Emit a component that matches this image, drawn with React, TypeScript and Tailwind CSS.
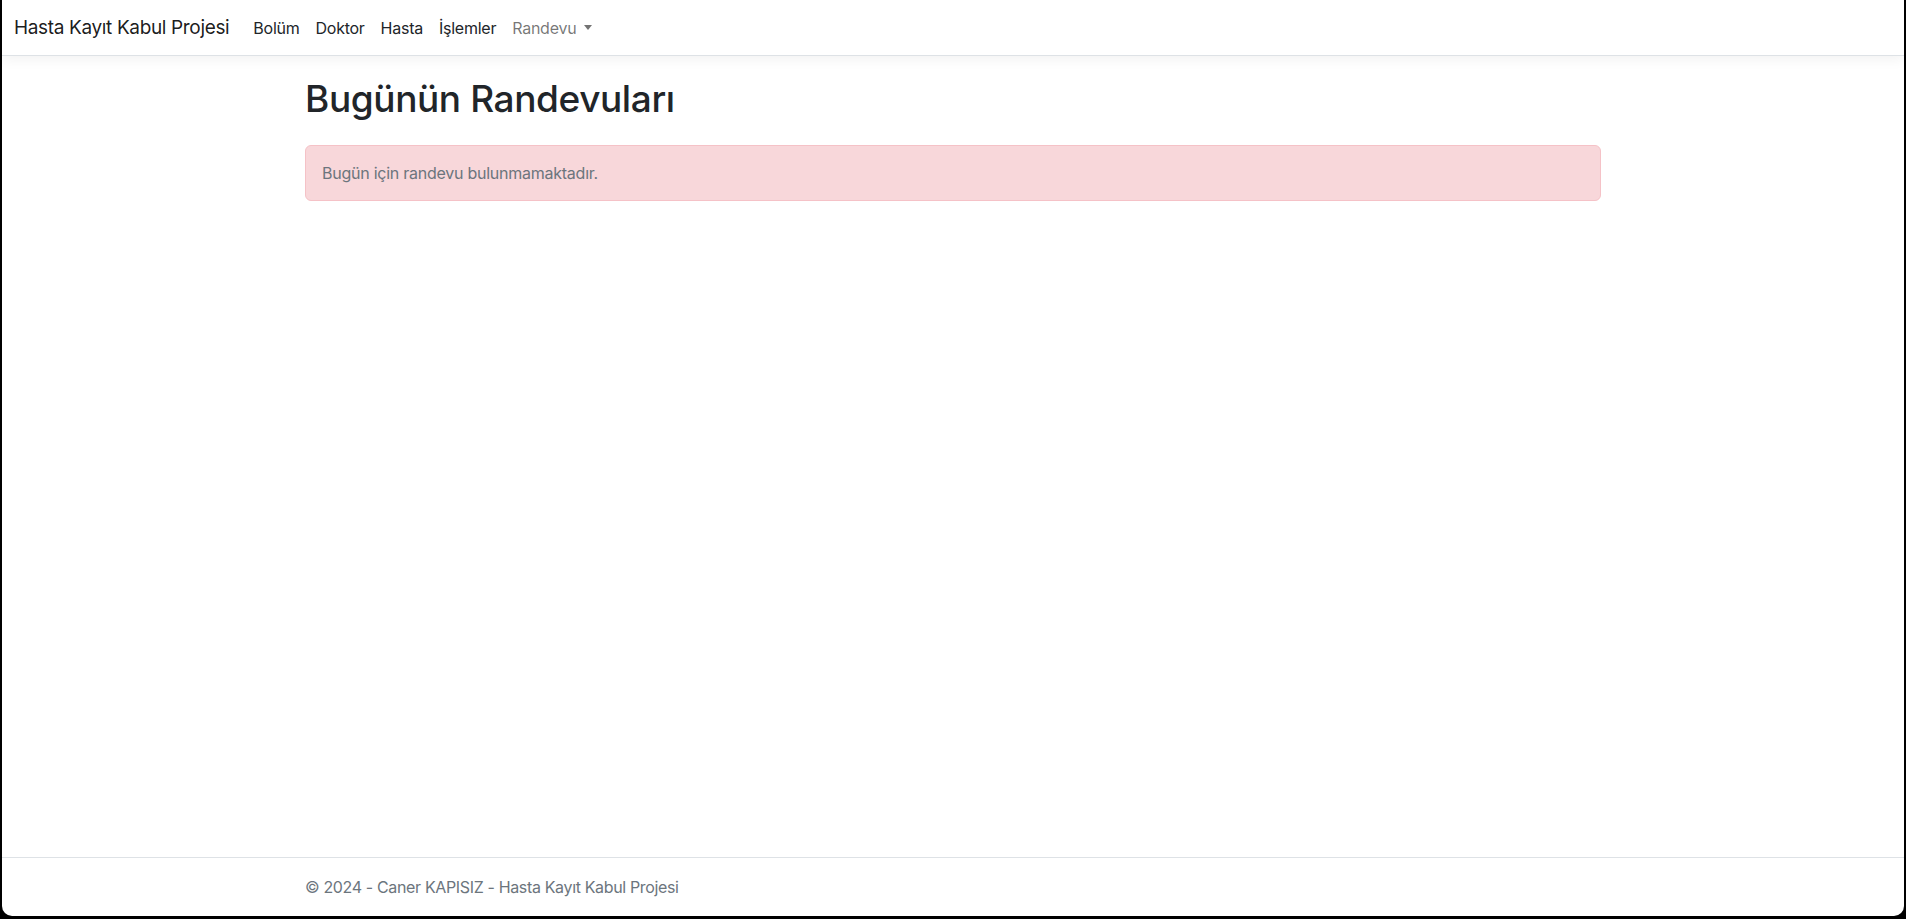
import React from "react";

const navItems = ["Bolüm", "Doktor", "Hasta", "İşlemler"];

const App = () => {
  return (
    <div
      className="h-screen w-full bg-black px-[2px] pb-[3px]"
      style={{ fontFamily: "Inter, 'Noto Sans', sans-serif" }}
    >
      <div className="h-full w-full bg-white rounded-b-[10px] flex flex-col overflow-hidden">
        {/* navbar */}
        <nav className="h-[56px] shrink-0 bg-white border-b border-[#dee2e6] shadow-[0_4px_12px_rgba(0,0,0,0.05)] flex items-center px-[12px] relative z-10">
          <a className="text-[19px] leading-[30px] text-[#000000e6] mr-[16px] tracking-[-0.35px]">
            Hasta Kayıt Kabul Projesi
          </a>
          <ul className="flex items-center">
            {navItems.map((item) => (
              <li key={item}>
                <a className="block px-[8px] py-[8px] text-[16px] leading-[24px] text-[#212529] tracking-[-0.25px]">
                  {item}
                </a>
              </li>
            ))}
            <li>
              <a className="flex items-center px-[8px] py-[8px] text-[16px] leading-[24px] text-[#0000008c] tracking-[-0.25px]">
                Randevu
                <span className="ml-[8px] w-0 h-0 border-x-[4px] border-x-transparent border-t-[5px] border-t-[#0000008c]" />
              </a>
            </li>
          </ul>
        </nav>

        {/* main */}
        <main className="flex-1">
          <div className="w-[1320px] mx-auto px-[12px]">
            <h1 className="mt-[19px] text-[37px] leading-[48px] font-medium text-[#212529] tracking-[-0.4px]">
              Bugünün Randevuları
            </h1>
            <div className="mt-[22px] rounded-[6px] border border-[#f5c2c7] bg-[#f8d7da] px-[16px] py-[15px] text-[16px] leading-[24px] text-[#6c757d] tracking-[-0.25px]">
              Bugün için randevu bulunmamaktadır.
            </div>
          </div>
        </main>

        {/* footer */}
        <footer className="h-[59px] shrink-0 border-t border-[#dee2e6] flex items-center">
          <div className="w-[1320px] mx-auto px-[12px] text-[16px] text-[#6c757d] tracking-[-0.35px]">
            © 2024 - Caner KAPISIZ - Hasta Kayıt Kabul Projesi
          </div>
        </footer>
      </div>
    </div>
  );
};

export default App;
